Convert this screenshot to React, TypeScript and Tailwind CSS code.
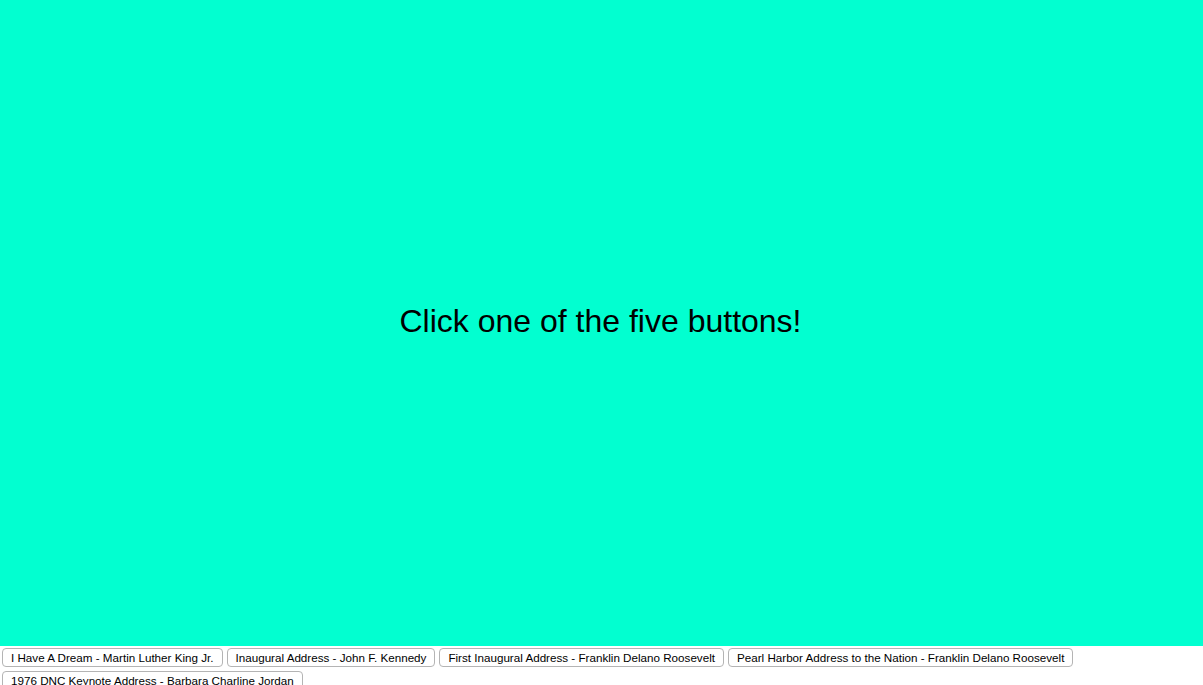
const speeches = [
  "I Have A Dream - Martin Luther King Jr.",
  "Inaugural Address - John F. Kennedy",
  "First Inaugural Address - Franklin Delano Roosevelt",
  "Pearl Harbor Address to the Nation - Franklin Delano Roosevelt",
  "1976 DNC Keynote Address - Barbara Charline Jordan",
];

export default function App() {
  return (
    <div className="min-h-screen bg-white font-['Liberation_Sans',Arial,sans-serif]">
      {/* Stage */}
      <div className="h-[646px] bg-[#02ffd0] flex items-center justify-center">
        <h1 className="text-[32px] text-black leading-none mb-[4px] mr-[2px]">Click one of the five buttons!</h1>
      </div>

      {/* Speech buttons */}
      <div className="flex flex-wrap gap-x-[4px] gap-y-[4px] px-[2px] pt-[2px]">
        {speeches.map((s) => (
          <button
            key={s}
            className="h-[19px] px-[8px] bg-white border border-[#b4b4b4] rounded-[4px] text-[11.65px] text-black leading-none"
          >
            {s}
          </button>
        ))}
      </div>
    </div>
  );
}
